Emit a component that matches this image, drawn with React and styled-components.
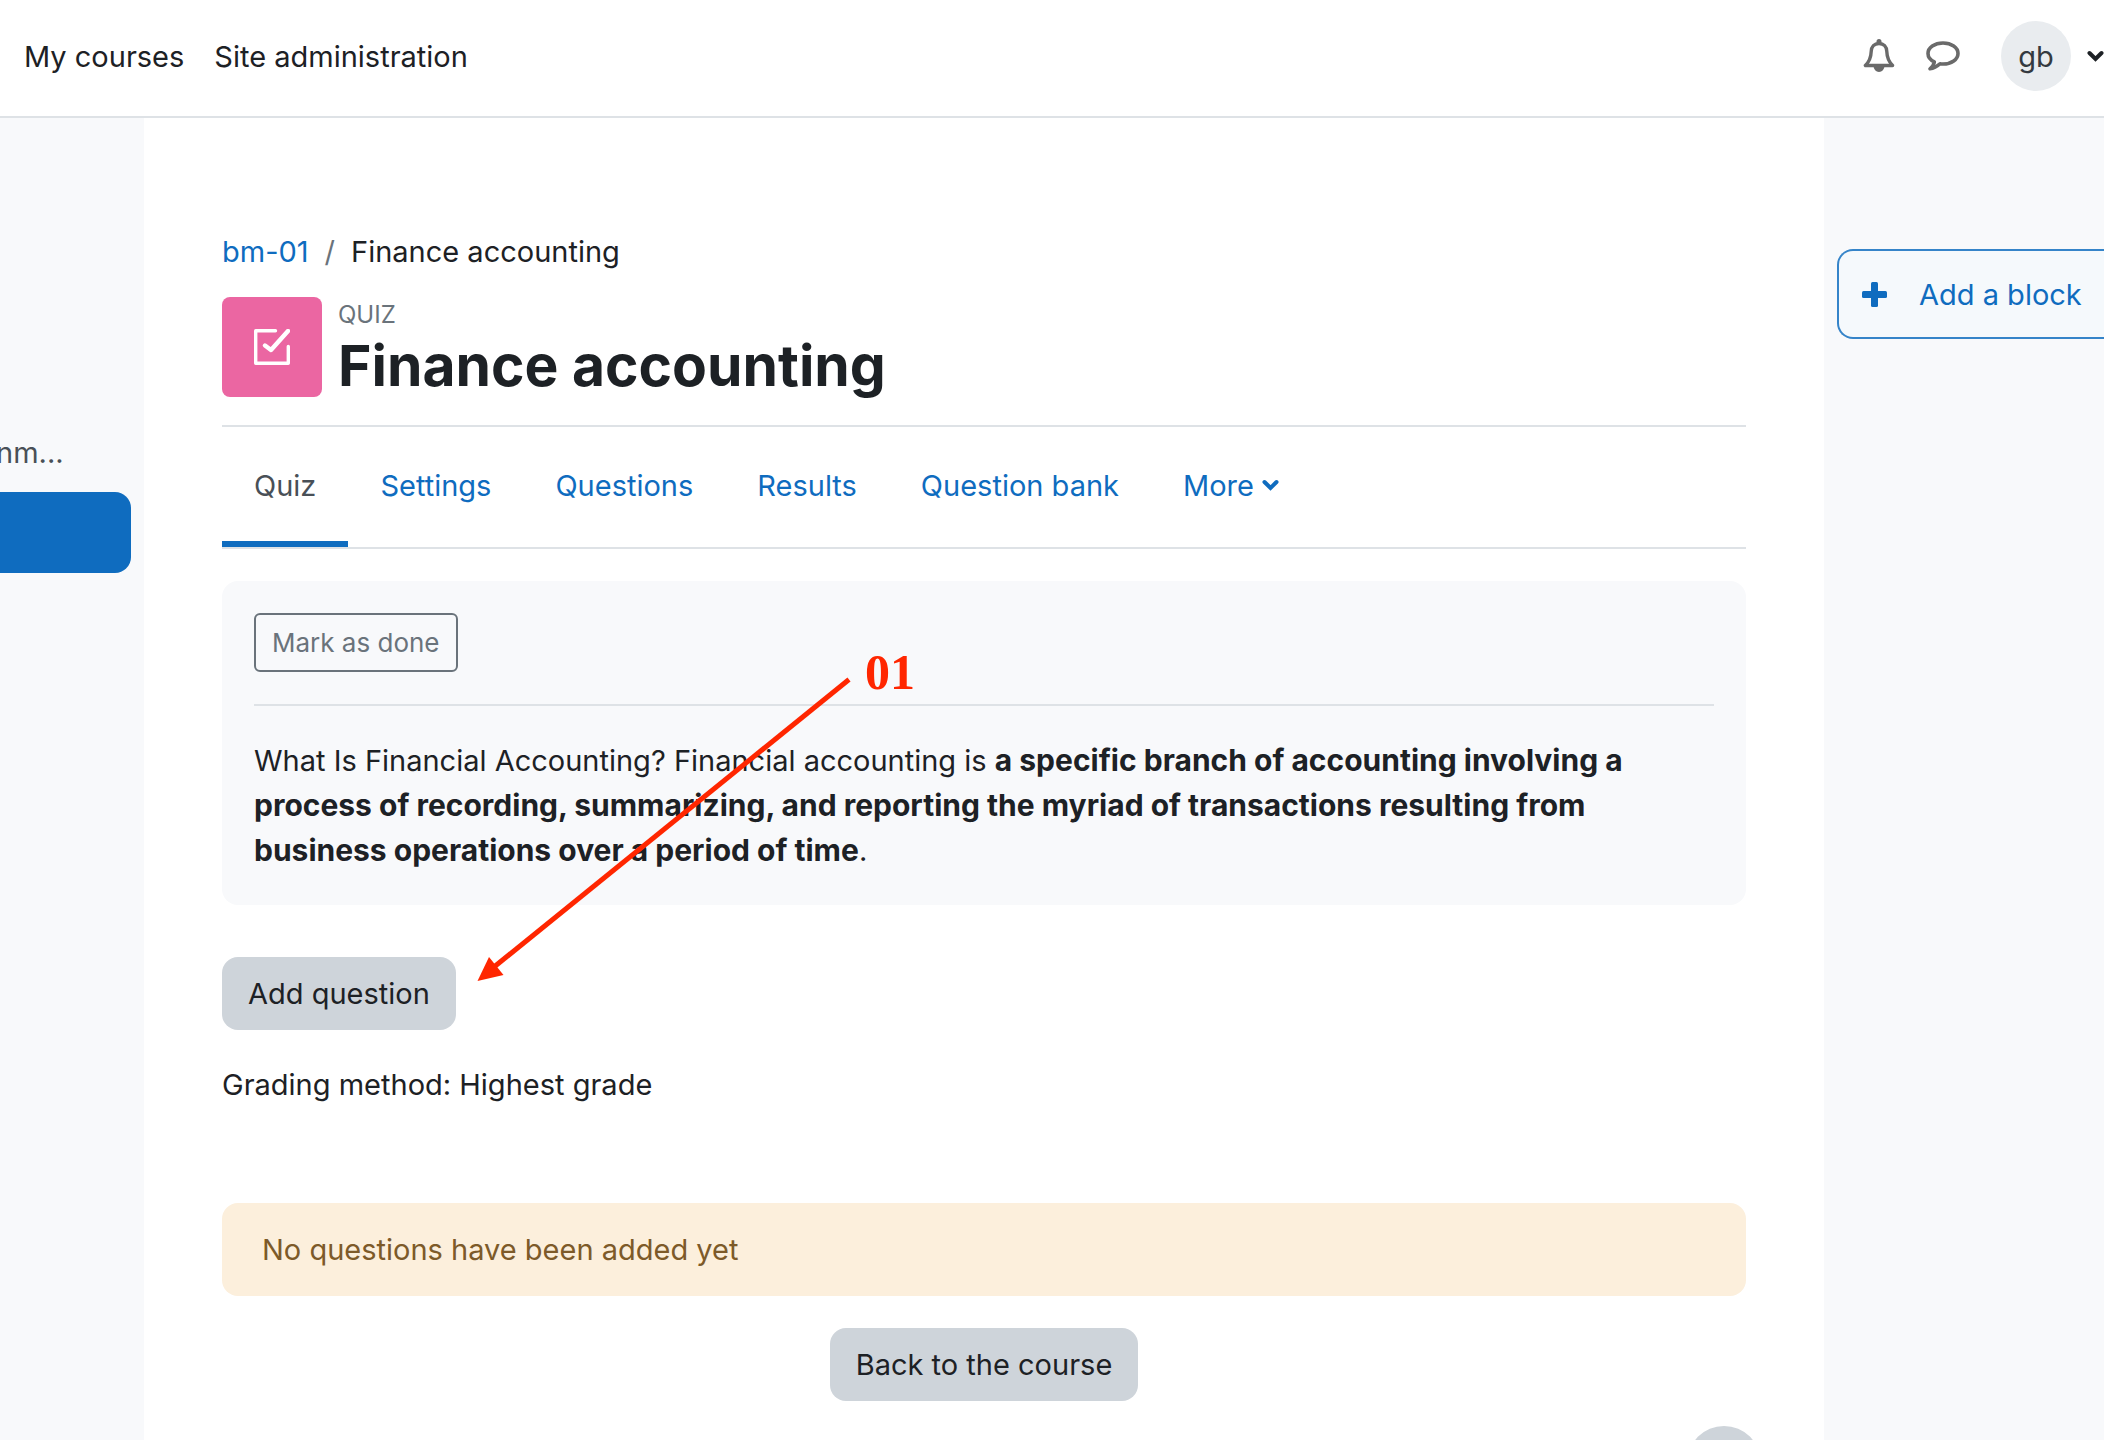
import React from "react";
import styled, { createGlobalStyle } from "styled-components";

const ink = "#1d2125";
const blue = "#0f6cbf";
const line = "#dee2e6";
const muted = "#6a737b";

const GlobalStyle = createGlobalStyle`
  *, *::before, *::after { box-sizing: border-box; }
  html, body, #root { height: 100%; }
  body {
    margin: 0;
    overflow: hidden;
    background: #fff;
    color: ${ink};
    font: 400 29px/45px Inter, "Liberation Sans", sans-serif;
  }
  button { font: inherit; color: inherit; cursor: pointer; }
  a { color: ${blue}; text-decoration: none; }
  p, h1, ol, ul { margin: 0; padding: 0; }
`;

const Page = styled.div`
  min-height: 100%;
  display: flex;
  flex-direction: column;
`;

const Header = styled.header`
  display: flex;
  align-items: center;
  justify-content: space-between;
  height: 118px;
  padding: 0 0 4px 24px;
  border-bottom: 2px solid ${line};
`;

const HeaderNav = styled.nav`
  display: flex;
  gap: 30px;
  a { color: ${ink}; white-space: nowrap; }
`;

const UserTools = styled.div`
  display: flex;
  align-items: center;
`;

const IconButton = styled.button`
  display: flex;
  width: 64px;
  padding: 0;
  justify-content: center;
  border: 0;
  background: none;
  color: #6a6a6a;
`;

const UserMenu = styled.button`
  display: flex;
  align-items: center;
  gap: 16px;
  padding: 0;
  margin-left: 26px;
  border: 0;
  background: none;
`;

const Avatar = styled.span`
  display: flex;
  align-items: center;
  justify-content: center;
  width: 70px;
  height: 70px;
  border-radius: 50%;
  background: #e9ecef;
  color: #343a40;
`;

const Columns = styled.div`
  flex: 1;
  display: grid;
  grid-template-columns: 144px minmax(0, 1fr) 280px;
  background: #f8f9fb;
`;

const IndexDrawer = styled.nav`
  display: flex;
  flex-direction: column;
  gap: 16px;
  padding: 312px 13px 0 0;
  overflow: hidden;
`;

const IndexLink = styled.a`
  height: 46px;
  margin-left: -4px;
  color: #495057;
  white-space: nowrap;
`;

const CurrentIndexItem = styled.a`
  height: 81px;
  border-radius: 0 16px 16px 0;
  background: ${blue};
`;

const BlockDrawer = styled.aside`
  padding: 131px 0 0 13px;
  overflow: hidden;
`;

const AddBlock = styled.button`
  display: flex;
  align-items: center;
  gap: 32px;
  width: 100%;
  height: 90px;
  padding: 0 0 0 23px;
  border: 2px solid #3584c9;
  border-right: 0;
  border-radius: 16px 0 0 16px;
  background: #f5f9fc;
  color: ${blue};
  white-space: nowrap;
`;

const Main = styled.main`
  display: flex;
  flex-direction: column;
  padding: 111px 78px 0;
  background: #fff;
`;

const Breadcrumb = styled.ol`
  display: flex;
  gap: 16px;
  list-style: none;
  li + li::before {
    content: "/";
    padding-right: 16px;
    color: ${muted};
  }
`;

const ActivityHeader = styled.div`
  display: flex;
  gap: 16px;
  padding: 23px 0 26px;
  border-bottom: 2px solid ${line};
`;

const ActivityIcon = styled.div`
  display: flex;
  align-items: center;
  justify-content: center;
  width: 100px;
  height: 100px;
  border-radius: 8px;
  background: #eb66a2;
`;

const ActivityType = styled.div`
  color: ${muted};
  font-size: 24px;
  line-height: 35px;
  text-transform: uppercase;
`;

const Title = styled.h1`
  font-size: 57px;
  font-weight: 700;
  line-height: 67px;
`;

const Tabs = styled.nav`
  display: flex;
  height: 122px;
  border-bottom: 2px solid ${line};
`;

const Tab = styled.a`
  display: flex;
  align-items: center;
  gap: 8px;
  padding: 0 32px;
  border-top: 2px solid transparent;
  border-bottom: 6px solid ${(p) => (p.$active ? blue : "transparent")};
  color: ${(p) => (p.$active ? "#495057" : blue)};
  white-space: nowrap;
`;

const InfoBox = styled.section`
  margin-top: 32px;
  padding: 32px;
  border-radius: 16px;
  background: #f8f9fb;
`;

const DoneButton = styled.button`
  display: block;
  height: 59px;
  padding: 0 16px;
  border: 2px solid ${muted};
  border-radius: 6px;
  background: none;
  color: ${muted};
  font-size: 26px;
  line-height: 32px;
`;

const Description = styled.p`
  margin-top: 32px;
  padding-top: 32px;
  border-top: 2px solid ${line};
  strong { font-size: 30px; }
`;

const Button = styled.button`
  align-self: ${(p) => (p.$centered ? "center" : "flex-start")};
  height: 73px;
  margin-top: ${(p) => (p.$centered ? 32 : 52)}px;
  padding: 0 26px;
  border: 0;
  border-radius: 16px;
  background: #ced4da;
`;

const Grading = styled.p`
  margin-top: 32px;
`;

const Alert = styled.div`
  margin-top: 96px;
  padding: 24px 40px;
  border-radius: 16px;
  background: #fcefdc;
  color: #7d5a29;
`;

const HelpButton = styled.button`
  position: fixed;
  right: 343px;
  bottom: -60px;
  width: 74px;
  height: 74px;
  border: 0;
  border-radius: 50%;
  background: #ced4da;
`;

const Annotation = styled.div`
  position: absolute;
  left: 470px;
  top: 640px;
  pointer-events: none;
  svg { display: block; }
`;

const AnnotationLabel = styled.span`
  position: absolute;
  left: 395px;
  top: 2px;
  color: #ff2600;
  font: 700 50px/60px "Liberation Serif", serif;
`;

const BellIcon = () => (
  <svg width="32" height="34" viewBox="0 0 32 34" fill="none" aria-hidden="true">
    <path d="M16 4.500c-4.800 0-7.600 3.200-7.800 8-.2 6.500-1.800 10-5.800 14h27.200c-4-4-5.600-7.500-5.800-14-.2-4.800-3-8-7.800-8z" stroke="currentColor" strokeWidth="3.400" strokeLinejoin="round" />
    <path d="M13.500 5V2.500a2.500 2.500 0 0 1 5 0V5zM10.500 27h11a5.500 6 0 0 1-11 0z" fill="currentColor" />
  </svg>
);

const ChatIcon = () => (
  <svg width="34" height="30" viewBox="0 0 34 30" fill="none" aria-hidden="true">
    <path d="M17 2C8.500 2 2 6.600 2 12.500c0 3.500 2.300 6.500 6.300 8.400-.4 2.900-1.600 4.600-4.300 6.900 4-.4 7-2.200 10-5 1 .2 2 .2 3 .2 8.500 0 15-4.600 15-10.500S25.500 2 17 2z" stroke="currentColor" strokeWidth="3.600" strokeLinejoin="round" />
  </svg>
);

const Chevron = () => (
  <svg width="17" height="12" viewBox="0 0 17 12" fill="none" aria-hidden="true">
    <path d="M2.500 3l6 6 6-6" stroke="currentColor" strokeWidth="4" strokeLinecap="round" />
  </svg>
);

const PlusIcon = () => (
  <svg width="25" height="25" viewBox="0 0 25 25" fill="currentColor" aria-hidden="true">
    <rect x="9" width="7" height="25" rx="1.500" />
    <rect y="9" width="25" height="7" rx="1.500" />
  </svg>
);

const QuizIcon = () => (
  <svg width="36" height="36" viewBox="0 0 36 36" fill="none" stroke="#fff" strokeLinecap="round" strokeLinejoin="round" aria-hidden="true">
    <path d="M21.500 1.700H1.700V34.300H34.300V17.500" strokeWidth="3.400" />
    <path d="M11 16.500L17 21L34 2" strokeWidth="4.400" />
  </svg>
);

const tabs = ["Quiz", "Settings", "Questions", "Results", "Question bank"];

export default function App() {
  return (
    <Page>
      <GlobalStyle />
      <Header>
        <HeaderNav>
          <a href="#courses">My courses</a>
          <a href="#admin">Site administration</a>
        </HeaderNav>
        <UserTools>
          <IconButton aria-label="Notifications"><BellIcon /></IconButton>
          <IconButton aria-label="Messages"><ChatIcon /></IconButton>
          <UserMenu aria-label="User menu">
            <Avatar>gb</Avatar>
            <Chevron />
          </UserMenu>
        </UserTools>
      </Header>
      <Columns>
        <IndexDrawer>
          <IndexLink href="#section">nm...</IndexLink>
          <CurrentIndexItem href="#quiz" aria-label="Finance accounting" />
        </IndexDrawer>
        <Main>
          <Breadcrumb>
            <li><a href="#course">bm-01</a></li>
            <li>Finance accounting</li>
          </Breadcrumb>
          <ActivityHeader>
            <ActivityIcon><QuizIcon /></ActivityIcon>
            <div>
              <ActivityType>Quiz</ActivityType>
              <Title>Finance accounting</Title>
            </div>
          </ActivityHeader>
          <Tabs>
            {tabs.map((name, i) => (
              <Tab key={name} href={`#tab-${i}`} $active={i === 0}>{name}</Tab>
            ))}
            <Tab href="#more">More <Chevron /></Tab>
          </Tabs>
          <InfoBox>
            <DoneButton>Mark as done</DoneButton>
            <Description>
              What Is Financial Accounting? Financial accounting is{" "}
              <strong>
                a specific branch of accounting involving a process of recording, summarizing, and
                reporting the myriad of transactions resulting from business operations over a
                period of time
              </strong>
              .
            </Description>
          </InfoBox>
          <Button>Add question</Button>
          <Grading>Grading method: Highest grade</Grading>
          <Alert>No questions have been added yet</Alert>
          <Button $centered>Back to the course</Button>
        </Main>
        <BlockDrawer>
          <AddBlock><PlusIcon />Add a block</AddBlock>
        </BlockDrawer>
      </Columns>
      <HelpButton aria-label="Help" />
      <Annotation>
        <svg width="390" height="350" viewBox="0 0 390 350" aria-hidden="true">
          <path d="M379 39.500L24 327" stroke="#ff2600" strokeWidth="5" />
          <path d="M7.500 341L19 317L33.500 335z" fill="#ff2600" />
        </svg>
        <AnnotationLabel>01</AnnotationLabel>
      </Annotation>
    </Page>
  );
}
